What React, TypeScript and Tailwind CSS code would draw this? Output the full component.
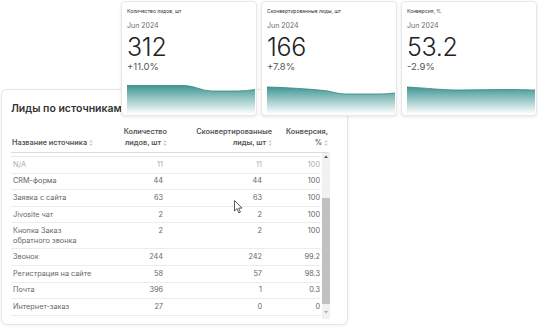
import React from "react";

interface Kpi {
  title: string;
  value: string;
  delta: string;
  line: string;
}

const kpis: Kpi[] = [
  {
    title: "Количество лидов, шт",
    value: "312",
    delta: "+11.0%",
    line: "M0 1.5 L58 1.5 C68 1.5 76 7 86 7 L112 7 C120 7 126 6 130 5.5",
  },
  {
    title: "Сконвертированные лиды, шт",
    value: "166",
    delta: "+7.8%",
    line: "M0 3 C20 3.5 45 5 62 7 C70 9 74 10 82 10 L112 10 C120 10 126 9.5 130 9",
  },
  {
    title: "Конверсия, %",
    value: "53.2",
    delta: "-2.9%",
    line: "M0 3 C20 4 35 6 52 6 L100 5.5 C115 5.5 124 6 130 6",
  },
];

const rows: { name: string[]; leads: number; conv: number; pct: string; muted?: boolean }[] = [
  { name: ["N/A"], leads: 11, conv: 11, pct: "100", muted: true },
  { name: ["CRM-форма"], leads: 44, conv: 44, pct: "100" },
  { name: ["Заявка с сайта"], leads: 63, conv: 63, pct: "100" },
  { name: ["Jivosite чат"], leads: 2, conv: 2, pct: "100" },
  { name: ["Кнопка Заказ", "обратного звонка"], leads: 2, conv: 2, pct: "100" },
  { name: ["Звонок"], leads: 244, conv: 242, pct: "99.2" },
  { name: ["Регистрация на сайте"], leads: 58, conv: 57, pct: "98.3" },
  { name: ["Почта"], leads: 396, conv: 1, pct: "0.3" },
  { name: ["Интернет-заказ"], leads: 27, conv: 0, pct: "0" },
];

function SortIcon() {
  return (
    <svg width="4" height="6" viewBox="0 0 4 6" className="inline-block ml-[2px] align-[-0.5px]">
      <path d="M2 0 L4 2.2 L0 2.2 Z" fill="#cfcfcf" />
      <path d="M2 6 L4 3.8 L0 3.8 Z" fill="#cfcfcf" />
    </svg>
  );
}

function KpiCard({ kpi, idx }: { kpi: Kpi; idx: number }) {
  const gid = `grad-${idx}`;
  return (
    <div className="w-[136px] h-[115px] bg-white rounded-[4px] border border-[#e8e8e8] shadow-[0_1px_3px_rgba(0,0,0,0.1)] px-[5px] flex flex-col">
      <div className="text-[5px] leading-[6px] text-[#333] mt-[6px]">{kpi.title}</div>
      <div className="text-[7px] leading-[8px] text-[#6b6b6b] mt-[8px]">Jun 2024</div>
      <div className="text-[25px] leading-[26px] text-[#222] font-light mt-[4px] tracking-[-0.3px]">{kpi.value}</div>
      <div className="text-[9.5px] leading-[10px] text-[#555] mt-[2px]">{kpi.delta}</div>
      <svg width="128" height="30" viewBox="0 0 130 30" preserveAspectRatio="none" className="mt-[12px]">
        <defs>
          <linearGradient id={gid} x1="0" y1="0" x2="0" y2="1">
            <stop offset="0%" stopColor="#3f9795" />
            <stop offset="100%" stopColor="#ffffff" />
          </linearGradient>
        </defs>
        <path d={`${kpi.line} L130 30 L0 30 Z`} fill={`url(#${gid})`} />
        <path d={kpi.line} fill="none" stroke="#2f8482" strokeWidth="0.8" />
      </svg>
    </div>
  );
}

function Cursor() {
  return (
    <svg width="9" height="14" viewBox="0 0 9 14" className="absolute left-[234px] top-[200px]">
      <path d="M0.5 0.5 L0.5 11 L3 8.6 L4.8 12.8 L6.4 12.1 L4.7 8.1 L8 8.1 Z" fill="#fff" stroke="#333" strokeWidth="0.8" strokeLinejoin="round" />
    </svg>
  );
}

export default function App() {
  return (
    <div
      className="relative w-[540px] h-[328px] bg-white overflow-hidden"
      style={{ fontFamily: "Inter, 'Noto Sans', sans-serif" }}
    >
      {/* KPI cards */}
      <div className="relative z-10 flex gap-[4px] pl-[121px] pt-[1px]">
        {kpis.map((k, i) => (
          <KpiCard key={k.title} kpi={k} idx={i} />
        ))}
      </div>

      {/* Sources table */}
      <div className="relative mt-[-27px] ml-[1px] w-[347px] h-[236px] bg-white rounded-[6px] border border-[#e6e6e6] shadow-[0_1px_3px_rgba(0,0,0,0.06)] px-[9px]">
        <h2 className="text-[10.5px] leading-[12px] font-semibold text-[#333] mt-[13px]">
          Лиды по источникам
        </h2>

        <div className="mt-[11px] grid grid-cols-[100px_56px_105px_56px] items-end pb-[4px] border-b border-[#dcdcdc] text-[7.3px] leading-[11px] font-semibold text-[#555] w-[318px]">
          <div className="pl-[1px]">
            Название источника
            <SortIcon />
          </div>
          <div className="text-right">
            Количество
            <br />
            лидов, шт
            <SortIcon />
          </div>
          <div className="text-right">
            Сконвертированные
            <br />
            лиды, шт
            <SortIcon />
          </div>
          <div className="text-right">
            Конверсия,
            <br />%
            <SortIcon />
          </div>
        </div>

        <div className="flex w-[319px]">
          <div className="w-[310px] text-[7.3px] leading-[10px] text-[#666]">
            <div className="h-[4px] border-b border-[#ececec]" />
            {rows.map((r) => {
              const tall = r.name.length > 1;
              return (
                <div
                  key={r.name[0]}
                  className={`grid grid-cols-[100px_52px_99px_59px] border-b border-[#ececec] ${
                    tall ? "h-[26px] pt-[3px]" : "h-[16.6px] items-center"
                  } ${r.muted ? "text-[#aaa]" : ""}`}
                >
                  <div className="pl-[2px] whitespace-nowrap">
                    {r.name.map((n) => (
                      <div key={n}>{n}</div>
                    ))}
                  </div>
                  <div className="text-right">{r.leads}</div>
                  <div className="text-right">{r.conv}</div>
                  <div className="text-right pr-[1px]">{r.pct}</div>
                </div>
              );
            })}
          </div>
          <div className="w-[8px] ml-[1px] h-[166px] bg-[#f1f1f1] flex flex-col items-center">
            <svg width="8" height="8" viewBox="0 0 8 8">
              <path d="M4 2.5 L6 5 L2 5 Z" fill="#555" />
            </svg>
            <div className="w-[8px] h-[106px] bg-[#c1c1c1] mt-[37px]" />
            <svg width="8" height="8" viewBox="0 0 8 8" className="mt-[4px]">
              <path d="M4 5.5 L6 3 L2 3 Z" fill="#aaa" />
            </svg>
          </div>
        </div>
      </div>

      <Cursor />
    </div>
  );
}
